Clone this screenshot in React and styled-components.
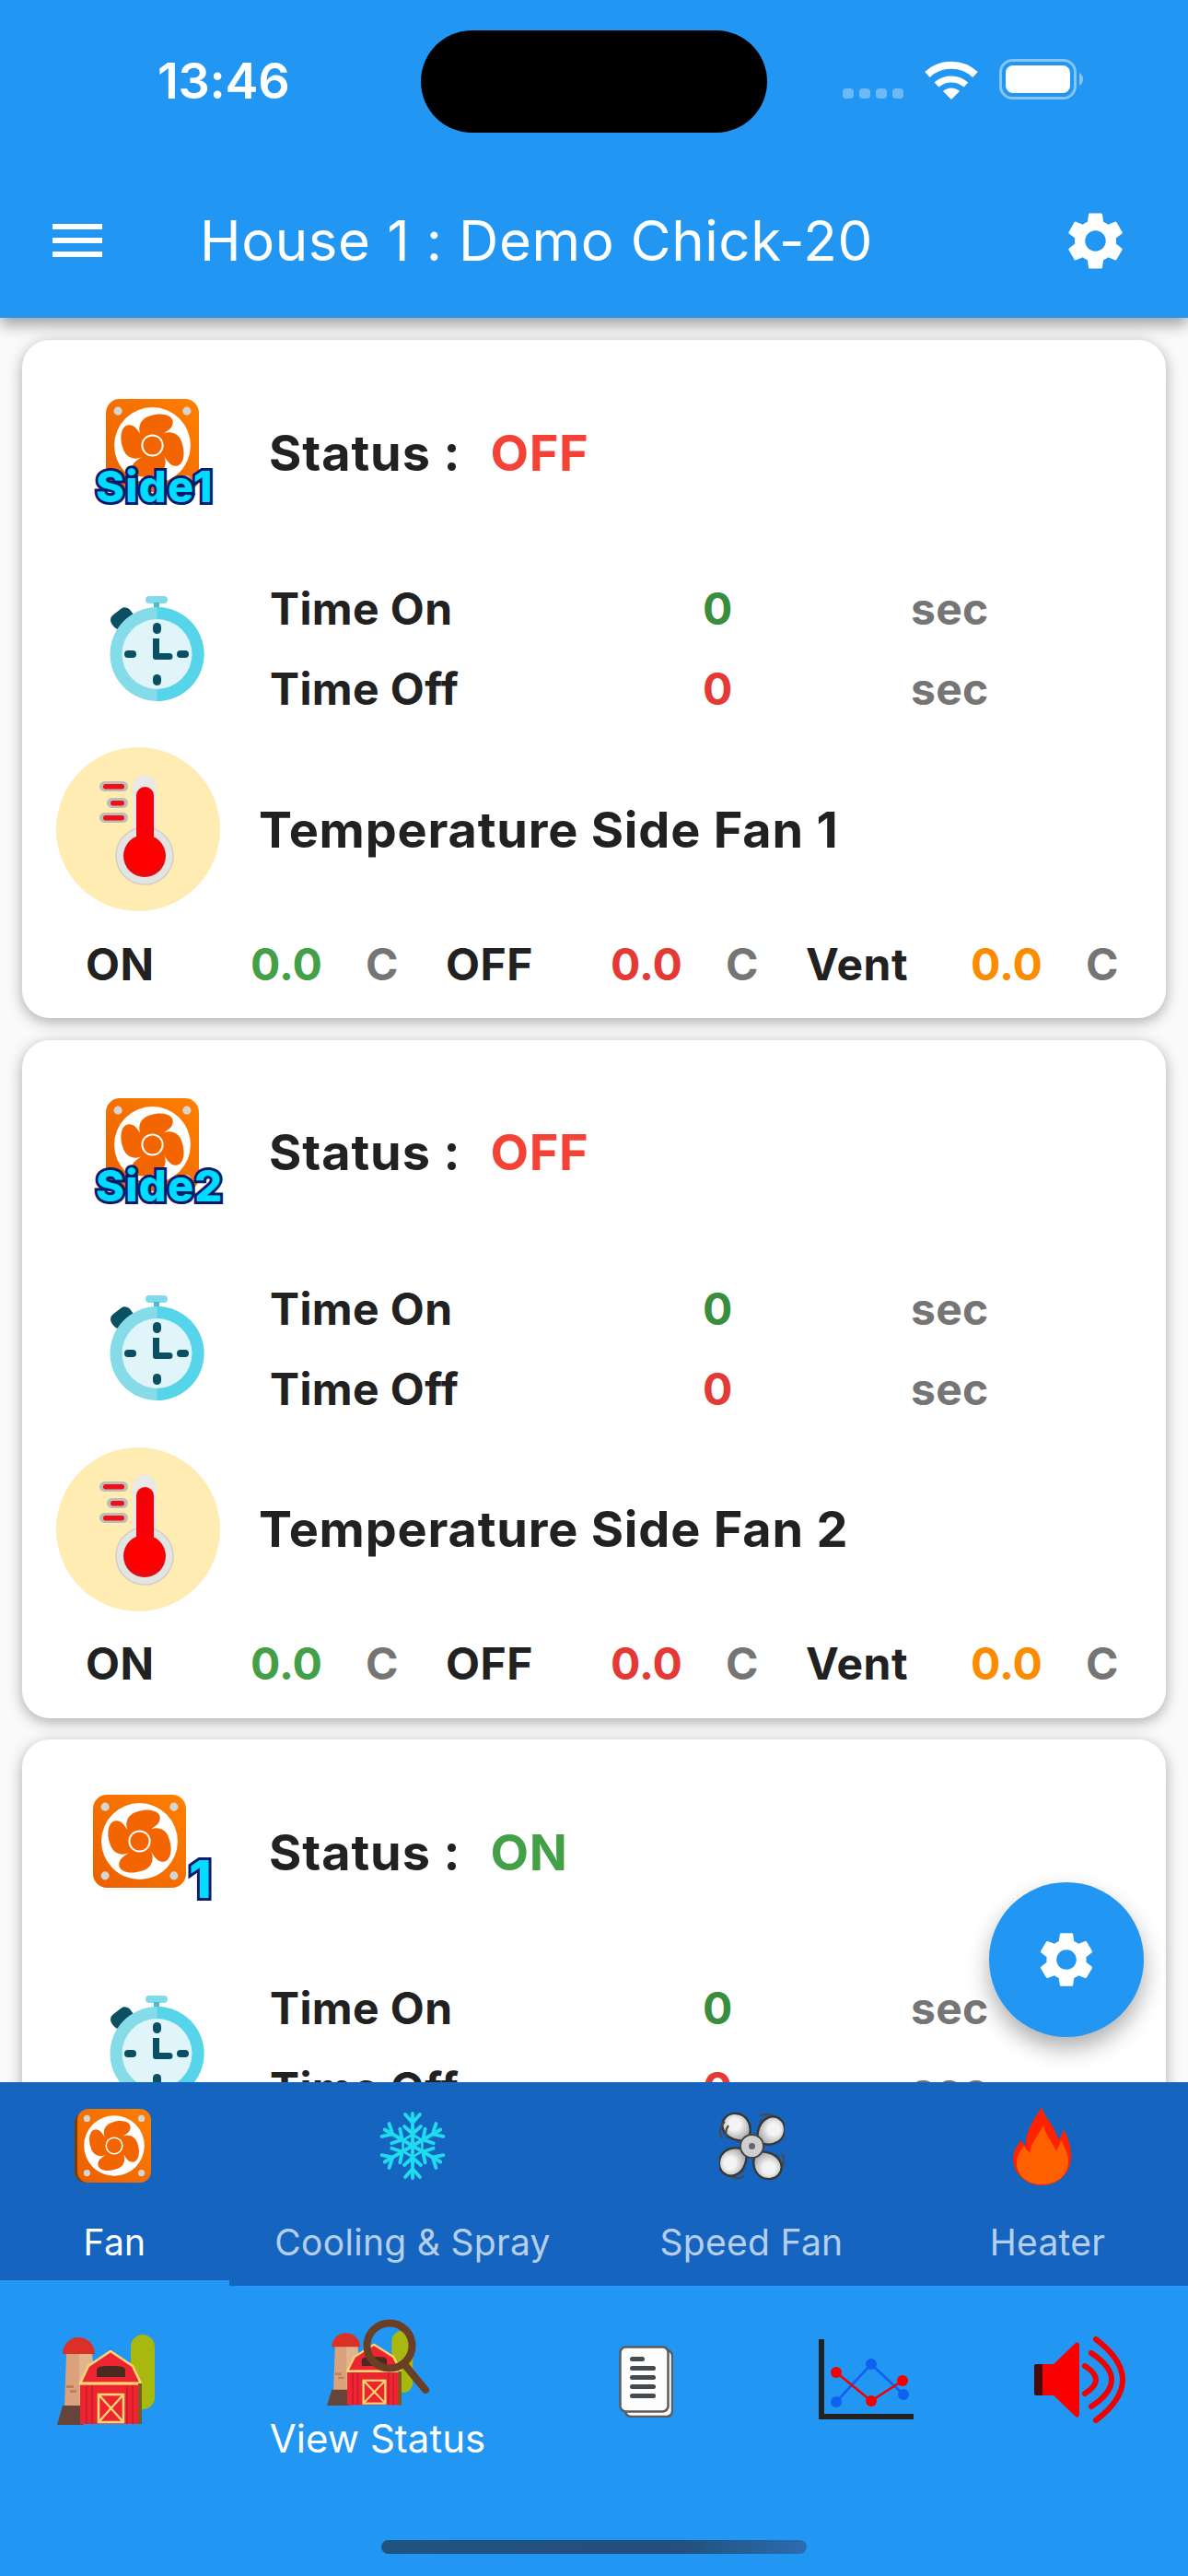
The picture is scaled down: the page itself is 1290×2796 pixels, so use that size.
import styled, { createGlobalStyle } from "styled-components";
import { MdMenu, MdSettings } from "react-icons/md";

const GlobalStyle = createGlobalStyle`
  * { box-sizing: border-box; }
  html, body { margin: 0; padding: 0; }
  body {
    font-family: Inter, "Noto Sans", sans-serif;
    font-feature-settings: "calt" 0;
    background: #fafafa;
  }
`;

const Screen = styled.div`
  position: relative;
  width: 1290px;
  height: 2796px;
  display: flex;
  flex-direction: column;
  overflow: hidden;
  background: #fafafa;
`;

const Header = styled.header`
  position: relative;
  z-index: 2;
  height: 345px;
  flex: none;
  background: #2196f3;
  color: #fff;
  box-shadow: 0 7px 16px rgba(0, 0, 0, 0.38);
`;

const StatusBar = styled.div`
  height: 225px;
  padding: 58px 113px 0 171px;
  display: flex;
  justify-content: space-between;
`;

const Clock = styled.div`
  font-size: 54px;
  font-weight: 600;
  line-height: 60px;
  letter-spacing: -0.3px;
`;

const Indicators = styled.div`
  display: flex;
  align-items: flex-end;
  height: 50px;
  gap: 23px;
`;

const Signal = styled.div`
  display: flex;
  gap: 6px;
  margin-bottom: 1px;
`;

const SignalDot = styled.span`
  width: 12px;
  height: 11px;
  border-radius: 4px;
  background: rgba(255, 255, 255, 0.35);
`;

const Notch = styled.div`
  position: absolute;
  left: 457px;
  top: 33px;
  width: 376px;
  height: 111px;
  border-radius: 56px;
  background: #000;
`;

const Toolbar = styled.div`
  height: 72px;
  display: flex;
  align-items: center;
  padding: 0 63px 0 48px;
`;

const ToolbarTitle = styled.h1`
  flex: 1;
  margin: 0 0 0 97px;
  font-size: 60px;
  font-weight: 400;
  line-height: 72px;
  letter-spacing: 0.6px;
`;

const Feed = styled.main`
  flex: 1;
  min-height: 0;
  overflow: hidden;
  padding: 24px 24px 0;
  display: flex;
  flex-direction: column;
  gap: 23.5px;
`;

const Card = styled.section`
  flex: none;
  height: 736px;
  background: #fff;
  border-radius: 30px;
  box-shadow: 0 4px 16px rgba(0, 0, 0, 0.32);
`;

const StatusRow = styled.div`
  height: 244px;
  display: flex;
  align-items: center;
  padding-left: 76px;
`;

const BadgeSlot = styled.div`
  width: 192px;
  display: flex;
`;

const StatusLabel = styled.span`
  font-size: 54px;
  font-weight: 650;
  letter-spacing: 0.9px;
  color: #212121;
`;

const RowLabel = styled.span`
  margin-left: -1px;
  font-size: 48px;
  font-weight: 650;
  letter-spacing: 0.4px;
  color: #212121;
`;

const StatusValue = styled.span`
  margin-left: 32px;
  font-size: 54px;
  font-weight: 650;
  letter-spacing: 0.6px;
  color: ${(p) => (p.$on ? "#43a047" : "#f44336")};
`;

const TimerRow = styled.div`
  height: 182px;
  display: grid;
  grid-template-columns: 270px 469px 226px 1fr;
  grid-template-rows: 87px 87px;
  align-content: center;
  align-items: center;
`;

const TimerIcon = styled.div`
  grid-row: 1 / span 2;
  padding-left: 95px;
  display: flex;
`;

const Amount = styled.span`
  font-size: 48px;
  font-weight: 650;
  color: ${(p) => p.$color};
`;

const Unit = styled.span`
  font-size: 48px;
  font-weight: 650;
  letter-spacing: 0.3px;
  color: #757575;
`;

const TempRow = styled.div`
  margin-top: 16px;
  height: 178px;
  display: flex;
  align-items: center;
  padding-left: 37px;
`;

const TempBubble = styled.div`
  width: 178px;
  height: 178px;
  border-radius: 50%;
  background: #ffecb3;
  display: flex;
`;

const TempTitle = styled.h2`
  margin: 0 0 0 42px;
  font-size: 54px;
  font-weight: 650;
  letter-spacing: 0.8px;
  color: #212121;
`;

const Limits = styled.div`
  height: 114px;
  padding-left: 69px;
  display: grid;
  grid-template-columns: repeat(3, 391px);
  align-items: center;
`;

const Limit = styled.div`
  display: grid;
  grid-template-columns: 179px 125px auto;
  align-items: center;
`;

const LimitLabel = styled.span`
  font-size: 48px;
  font-weight: 650;
  letter-spacing: 0.5px;
  color: #212121;
`;

const Fab = styled.button`
  position: absolute;
  left: 1074px;
  top: 2043px;
  z-index: 1;
  width: 168px;
  height: 168px;
  padding: 0;
  border: 0;
  border-radius: 50%;
  background: #2196f3;
  color: #fff;
  display: flex;
  align-items: center;
  justify-content: center;
  box-shadow: 0 12px 24px rgba(0, 0, 0, 0.32);
`;

const TabBar = styled.nav`
  position: relative;
  z-index: 2;
  flex: none;
  height: 221px;
  background: #1565c0;
  display: grid;
  grid-template-columns: 249px 398px 338px 305px;
`;

const Tab = styled.div`
  height: 221px;
  padding-top: 24px;
  display: flex;
  flex-direction: column;
  align-items: center;
  border-bottom: 6px solid ${(p) => (p.$active ? "#2196f3" : "transparent")};
`;

const TabIcon = styled.div`
  height: 90px;
  margin-right: ${(p) => p.$shift || 0}px;
  display: flex;
  align-items: center;
`;

const TabLabel = styled.span`
  margin-top: 36px;
  font-size: 39px;
  line-height: 48px;
  letter-spacing: 0.3px;
  color: ${(p) => (p.$active ? "#fff" : "rgba(255, 255, 255, 0.7)")};
`;

const BottomNav = styled.nav`
  position: relative;
  z-index: 2;
  flex: none;
  height: 315px;
  background: #2196f3;
  display: grid;
  grid-template-columns: 230px 360px 222px 256px 210px;
`;

const NavItem = styled.div`
  display: flex;
  flex-direction: column;
  align-items: center;
  padding-top: ${(p) => p.$top}px;
`;

const NavLabel = styled.span`
  margin-top: 11px;
  font-size: 42px;
  line-height: 50px;
  color: #fff;
`;

const HomeBar = styled.div`
  position: absolute;
  z-index: 3;
  left: 414px;
  top: 2757px;
  width: 462px;
  height: 15px;
  border-radius: 8px;
  background: linear-gradient(90deg, #215381 0%, #23507c 70%, #2a6db0 100%);
`;

function Wifi() {
  return (
    <svg width="58" height="42" viewBox="0 0 58 42">
      <path d="M3 15A38 38 0 0 1 55 15" fill="none" stroke="#fff" strokeWidth="8" />
      <path d="M13 26A24 24 0 0 1 45 26" fill="none" stroke="#fff" strokeWidth="7" />
      <path d="M20 33A13 13 0 0 1 38 33L29 42Z" fill="#fff" />
    </svg>
  );
}

function Battery() {
  return (
    <svg width="92" height="44" viewBox="0 0 92 44">
      <rect x="1.5" y="1.5" width="81" height="41" rx="13" fill="none" stroke="#fff" strokeOpacity=".45" strokeWidth="3" />
      <rect x="7" y="7" width="70" height="30" rx="8" fill="#fff" />
      <path d="M87 15C90 17 91 19 91 22C91 25 90 27 87 29Z" fill="#fff" fillOpacity=".45" />
    </svg>
  );
}

// orange box fan, drawn on a 100x100 grid
function FanArt({ x = 0, y = 0, scale = 1 }) {
  const blade = "M39 42C33 32 36 21 48 18C60 14 73 17 72 26C71 34 62 35 60 40C55 45 44 47 39 42Z";
  return (
    <g transform={`translate(${x} ${y}) scale(${scale})`}>
      <rect width="100" height="100" rx="15" fill="url(#fanOrange)" />
      <circle cx="50" cy="50" r="41" fill="#fff" />
      {[0, 90, 180, 270].map((r) => (
        <path key={r} d={blade} fill="#f26500" transform={`rotate(${r} 50 50)`} />
      ))}
      <circle cx="50" cy="50" r="12" fill="#fff" />
      <circle cx="50" cy="50" r="10" fill="#f26500" />
      {[[13, 13], [87, 13], [13, 87], [87, 87]].map(([cx, cy]) => (
        <circle key={cx + "-" + cy} cx={cx} cy={cy} r="4.5" fill="#d5d5d5" />
      ))}
    </g>
  );
}

function FanDefs() {
  return (
    <defs>
      <linearGradient id="fanOrange" x1="0" y1="1" x2="1" y2="0">
        <stop offset="0" stopColor="#ea5f00" />
        <stop offset="1" stopColor="#ff8000" />
      </linearGradient>
    </defs>
  );
}

function SideFan({ side }) {
  return (
    <svg width="142" height="125" viewBox="0 0 142 125" overflow="visible">
      <FanDefs />
      <FanArt x={15} y={4} scale={1.01} />
      <text
        x="4"
        y="116"
        fontFamily="Inter, sans-serif"
        fontWeight="800"
        fontSize="47"
        letterSpacing="1.2"
        fill="#00dcff"
        stroke="#0a1a6b"
        strokeWidth="6"
        paintOrder="stroke"
      >
        {"Side" + side}
      </text>
    </svg>
  );
}

function NumberedFan() {
  return (
    <svg width="142" height="125" viewBox="0 0 142 125" overflow="visible">
      <FanDefs />
      <FanArt x={1} y={0} scale={1.01} />
      <text
        x="105"
        y="112"
        fontFamily="Inter, sans-serif"
        fontWeight="800"
        fontSize="56"
        fill="#00dcff"
        stroke="#0a1a6b"
        strokeWidth="6"
        paintOrder="stroke"
      >
        1
      </text>
    </svg>
  );
}

function Stopwatch() {
  return (
    <svg width="103" height="115" viewBox="0 0 103 115">
      <rect x="39" y="0" width="24" height="8" rx="4" fill="#7fdbe9" />
      <rect x="48" y="7" width="6" height="7" fill="#4fb9cc" />
      <rect x="1" y="15" width="25" height="18" rx="7" fill="#0b4f63" transform="rotate(-38 14 24)" />
      <circle cx="51.5" cy="63" r="51" fill="#86dbe9" />
      <path d="M51.5 12A51 51 0 0 1 51.5 114Z" fill="#56d4ea" />
      <circle cx="51.5" cy="63" r="38" fill="#dff5f9" />
      <rect x="47" y="29" width="9" height="12" rx="4.5" fill="#0b4f63" />
      <rect x="47" y="85" width="9" height="12" rx="4.5" fill="#0b4f63" />
      <rect x="16" y="59" width="13" height="8" rx="4" fill="#0b4f63" />
      <rect x="73" y="59" width="13" height="8" rx="4" fill="#0b4f63" />
      <path d="M47 46h7v16h11a3.5 3.5 0 0 1 0 7H50a3 3 0 0 1-3-3Z" fill="#0b4f63" />
    </svg>
  );
}

function Thermometer() {
  return (
    <svg width="178" height="178" viewBox="0 0 178 178">
      <defs>
        <radialGradient id="bulbRed" cx=".5" cy=".45" r=".55">
          <stop offset=".7" stopColor="#ff0000" />
          <stop offset="1" stopColor="#d81018" />
        </radialGradient>
      </defs>
      {[[47, 37, 31], [55, 55, 23], [47, 71, 31]].map(([x, y, w]) => (
        <g key={y}>
          <rect x={x} y={y} width={w} height="11" rx="5.5" fill="#bdbdb8" />
          <rect x={x + 4} y={y + 3} width={w - 8} height="5.5" rx="2.7" fill="#ee0f18" />
        </g>
      ))}
      <rect x="83" y="30" width="26" height="70" rx="13" fill="#e9e9e7" />
      <circle cx="96" cy="118" r="31" fill="#e4e4e2" stroke="#cfcfca" strokeWidth="1.5" />
      <rect x="87" y="43" width="19" height="70" rx="9.5" fill="#f80008" />
      <circle cx="96" cy="118" r="23" fill="url(#bulbRed)" />
    </svg>
  );
}

function TabFan() {
  return (
    <svg width="84" height="80" viewBox="0 0 84 80">
      <FanDefs />
      <rect x="0" y="3" width="76" height="77" rx="12" fill="#7a3e00" />
      <FanArt x={3} y={0} scale={0.8} />
    </svg>
  );
}

function Snowflake() {
  const arm = (
    <g>
      <path d="M38 38V3" />
      <path d="M38 13L30 4M38 13L46 4" />
      <path d="M38 25L29 17M38 25L47 17" />
      <path d="M38 26L48.4 32" strokeWidth="2.6" />
    </g>
  );
  return (
    <svg width="76" height="76" viewBox="0 0 76 76" fill="none" stroke="#1fdcee" strokeWidth="3.8" strokeLinecap="round">
      {[0, 60, 120, 180, 240, 300].map((r) => (
        <g key={r} transform={`rotate(${r} 38 38)`}>{arm}</g>
      ))}
    </svg>
  );
}

function GreyFan() {
  return (
    <svg width="71" height="75" viewBox="0 0 71 75">
      <defs>
        <radialGradient id="greyBlade" cx=".45" cy=".4" r=".6">
          <stop offset=".35" stopColor="#f4f4f4" />
          <stop offset="1" stopColor="#a8a8a8" />
        </radialGradient>
      </defs>
      {[0, 90, 180, 270].map((r) => (
        <g key={r} transform={`rotate(${r} 35.5 37.5)`}>
          <path d="M44 5C50 1 58 3 62 8M44 11C49 8 54 9 58 12" fill="none" stroke="#4a4a4a" strokeWidth="2.2" />
          <path d="M30 31C22 33 8 30 4 19C1 9 9 1 19 2C29 3 36 13 33 25Z" fill="url(#greyBlade)" stroke="#383838" strokeWidth="2.4" />
        </g>
      ))}
      <circle cx="35.5" cy="37.5" r="12.5" fill="#cfcfcf" stroke="#444" strokeWidth="2" />
      <circle cx="35.5" cy="37.5" r="3.5" fill="#666" />
    </svg>
  );
}

function Flame() {
  return (
    <svg width="64" height="85" viewBox="0 0 64 85">
      <path d="M31 0C34 12 46 20 49 36C52 32 54 28 55 24C61 36 64 46 63 56C62 73 48 85 32 85C14 85 1 73 0 57C0 47 5 41 9 36C11 39 12 41 14 42C13 26 23 14 31 0Z" fill="#ff2200" />
      <path d="M33 20C36 32 43 38 47 48C49 44 51 40 52 36C58 46 60 54 60 60C59 75 47 84 32 84C17 84 4 76 4 60C4 52 9 46 12 42C14 46 16 48 19 50C18 40 27 32 33 20Z" fill="#ff6000" />
    </svg>
  );
}

function BarnArt() {
  return (
    <g>
      <path d="M80 14A13 13 0 0 1 106 14V68A13 13 0 0 1 92 82H80Z" fill="#a8b80e" />
      <path d="M10 21H38L42 80H8Z" fill="#d9a27c" />
      <path d="M24 21H38L42 80H24Z" fill="#e3b38f" />
      <path d="M10 56h8v3h-8zM14 61h7v3h-7z" fill="#c47e56" />
      <path d="M6 78H28V99H0Z" fill="#66443a" />
      <path d="M6 22C6 12 14 4 23 4C33 4 41 12 41 22Z" fill="#dc2f25" />
      <rect x="25" y="52" width="67" height="46" fill="#ee2430" />
      <path d="M25 54L34 35L58 19L82 35L91 54Z" fill="#ee2430" stroke="#f7d774" strokeWidth="2.6" strokeLinejoin="round" />
      <path d="M32 56V98M38 56V98M76 56V98M82 56V98" stroke="#c81c28" strokeWidth="1.6" />
      <path d="M43 47V40C43 36 46 35 58 35C71 35 74 36 74 40V47Z" fill="#4a2a20" />
      <path d="M24 54H92" stroke="#f7d774" strokeWidth="3" />
      <rect x="45" y="66" width="27" height="30" fill="none" stroke="#f7d774" strokeWidth="2.6" />
      <path d="M45 66L72 96M72 66L45 96" stroke="#f7d774" strokeWidth="2.4" />
      <rect x="88" y="54" width="4" height="44" fill="#7c5b20" />
    </g>
  );
}

function Barn() {
  return (
    <svg width="106" height="99" viewBox="0 0 106 99">
      <BarnArt />
    </svg>
  );
}

function BarnSearch() {
  return (
    <svg width="111" height="94" viewBox="0 0 111 94">
      <g transform="translate(0 12) scale(.88 .83)">
        <BarnArt />
      </g>
      <circle cx="68" cy="29" r="24.5" fill="none" stroke="#6b3e26" strokeWidth="8" />
      <path d="M84 49L107 77" stroke="#6b3e26" strokeWidth="8" strokeLinecap="round" />
    </svg>
  );
}

function Papers() {
  return (
    <svg width="59" height="78" viewBox="0 0 59 78">
      <rect x="7" y="5" width="51" height="72" rx="6" fill="#fff" stroke="#5c5c5c" strokeWidth="2.5" />
      <rect x="1.5" y="1.5" width="52" height="70" rx="6" fill="#fdfdfd" stroke="#5c5c5c" strokeWidth="2.5" />
      {[[12, 16], [22, 28], [32, 28], [42, 28], [52, 28]].map(([y, w]) => (
        <rect key={y} x="12" y={y} width={w} height="5" rx="2.5" fill="#454a4f" />
      ))}
    </svg>
  );
}

function TrendChart() {
  const blue = [[19, 68], [57, 27], [92, 60]];
  const red = [[19, 36], [57, 67], [91, 45]];
  const line = (pts) => pts.map((p) => p.join(",")).join(" ");
  return (
    <svg width="103" height="88" viewBox="0 0 103 88">
      <path d="M0 0H6V81H103V87H0Z" fill="#222" />
      <polyline points={line(blue)} fill="none" stroke="#0f62f0" strokeWidth="2.6" />
      <polyline points={line(red)} fill="none" stroke="#f00000" strokeWidth="2.6" />
      {blue.map(([cx, cy]) => (
        <circle key={cx} cx={cx} cy={cy} r="6" fill="#0f62f0" />
      ))}
      {red.map(([cx, cy]) => (
        <circle key={cx} cx={cx} cy={cy} r="6" fill="#f40000" />
      ))}
    </svg>
  );
}

function Speaker() {
  return (
    <svg width="100" height="94" viewBox="0 0 100 94">
      <rect x="0" y="30" width="10" height="34" rx="2" fill="#4a0a0a" />
      <path d="M9 30H21L44 8C47 5 49 7 49 10V84C49 88 46 89 44 86L21 64H9Z" fill="#fa0000" />
      <g fill="none" stroke="#f00000" strokeWidth="6" strokeLinecap="round">
        <path d="M55 32Q79 47 55 62" />
        <path d="M62 18Q106 47 62 76" />
        <path d="M67 3Q125 47 67 91" />
      </g>
    </svg>
  );
}

const TABS = [
  { label: "Fan", Icon: TabFan, active: true, shift: 4 },
  { label: "Cooling & Spray", Icon: Snowflake },
  { label: "Speed Fan", Icon: GreyFan },
  { label: "Heater", Icon: Flame, shift: 11 },
];

const LIMITS = [
  { label: "ON", color: "#43a047" },
  { label: "OFF", color: "#e53935" },
  { label: "Vent", color: "#fb8c00" },
];

const CARDS = [
  { id: "side1", badge: <SideFan side="1" />, status: "OFF", title: "Temperature Side Fan 1" },
  { id: "side2", badge: <SideFan side="2" />, status: "OFF", title: "Temperature Side Fan 2" },
  { id: "fan1", badge: <NumberedFan />, status: "ON", title: "Temperature Fan 1" },
];

function FanCard({ badge, status, title }) {
  return (
    <Card>
      <StatusRow>
        <BadgeSlot>{badge}</BadgeSlot>
        <StatusLabel>Status :</StatusLabel>
        <StatusValue $on={status === "ON"}>{status}</StatusValue>
      </StatusRow>
      <TimerRow>
        <TimerIcon>
          <Stopwatch />
        </TimerIcon>
        <RowLabel>Time On</RowLabel>
        <Amount $color="#388e3c">0</Amount>
        <Unit>sec</Unit>
        <RowLabel>Time Off</RowLabel>
        <Amount $color="#e53935">0</Amount>
        <Unit>sec</Unit>
      </TimerRow>
      <TempRow>
        <TempBubble>
          <Thermometer />
        </TempBubble>
        <TempTitle>{title}</TempTitle>
      </TempRow>
      <Limits>
        {LIMITS.map((l) => (
          <Limit key={l.label}>
            <LimitLabel>{l.label}</LimitLabel>
            <Amount $color={l.color}>0.0</Amount>
            <Unit>C</Unit>
          </Limit>
        ))}
      </Limits>
    </Card>
  );
}

export default function App() {
  return (
    <Screen>
      <GlobalStyle />
      <Header>
        <StatusBar>
          <Clock>13:46</Clock>
          <Indicators>
            <Signal>
              <SignalDot />
              <SignalDot />
              <SignalDot />
              <SignalDot />
            </Signal>
            <Wifi />
            <Battery />
          </Indicators>
        </StatusBar>
        <Notch />
        <Toolbar>
          <MdMenu size={72} />
          <ToolbarTitle>House 1 : Demo Chick-20</ToolbarTitle>
          <MdSettings size={75} />
        </Toolbar>
      </Header>
      <Feed>
        {CARDS.map((c) => (
          <FanCard key={c.id} badge={c.badge} status={c.status} title={c.title} />
        ))}
      </Feed>
      <Fab aria-label="Settings">
        <MdSettings size={72} />
      </Fab>
      <TabBar>
        {TABS.map(({ label, Icon, active, shift }) => (
          <Tab key={label} $active={active}>
            <TabIcon $shift={shift}>
              <Icon />
            </TabIcon>
            <TabLabel $active={active}>{label}</TabLabel>
          </Tab>
        ))}
      </TabBar>
      <BottomNav>
        <NavItem $top={52}>
          <Barn />
        </NavItem>
        <NavItem $top={36}>
          <BarnSearch />
          <NavLabel>View Status</NavLabel>
        </NavItem>
        <NavItem $top={65}>
          <Papers />
        </NavItem>
        <NavItem $top={58}>
          <TrendChart />
        </NavItem>
        <NavItem $top={55}>
          <Speaker />
        </NavItem>
      </BottomNav>
      <HomeBar />
    </Screen>
  );
}
